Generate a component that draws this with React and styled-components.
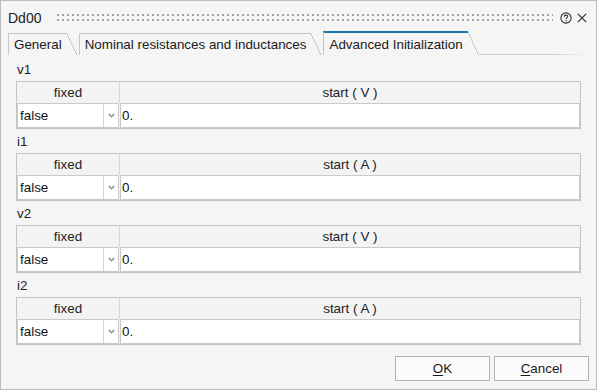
import React from "react";
import styled, { createGlobalStyle } from "styled-components";

const GlobalStyle = createGlobalStyle`
  html, body {
    margin: 0;
    padding: 0;
    background: #ffffff;
  }
  * {
    box-sizing: border-box;
  }
`;

const Window = styled.div`
  width: 597px;
  height: 390px;
  border: 1px solid #bdbdbd;
  background: #f5f5f5;
  font-family: "Liberation Sans", Arial, sans-serif;
  font-size: 13.4px;
  color: #1e1e1e;
  display: flex;
  flex-direction: column;
`;

const TitleBar = styled.div`
  height: 30px;
  padding: 3px 8px 0 7px;
  display: flex;
  align-items: center;
`;

const Title = styled.div`
  font-size: 14px;
  color: #222;
  margin-right: 16px;
`;

// two rows of dots, drag handle
const Grip = styled.div`
  flex: 1;
  height: 7px;
  margin-right: 7px;
  position: relative;

  &::before,
  &::after {
    content: "";
    position: absolute;
    left: 0;
    right: 0;
    height: 2px;
    background-image: linear-gradient(to right, #a3a3a3 2px, transparent 2px);
    background-size: 5px 2px;
  }
  &::before {
    top: 0;
  }
  &::after {
    top: 5px;
  }
`;

const IconButton = styled.span`
  width: 12px;
  height: 12px;
  margin-left: ${(p) => p.$gap || 0}px;
  display: flex;
  align-items: center;
  justify-content: center;
`;

const TabBar = styled.div`
  height: 24px;
  padding-left: 7px;
  display: flex;
  align-items: flex-end;
`;

const Tab = styled.div`
  position: relative;
  height: ${(p) => (p.$active ? 24 : 22)}px;
  padding: 0 5px;
  margin-right: ${(p) => (p.$active ? 10 : 12)}px;
  border-left: 1px solid #c6c6c6;
  border-top: ${(p) => (p.$active ? "2px solid #1b78a8" : "1px solid #c6c6c6")};
  display: flex;
  align-items: center;
  white-space: nowrap;
  color: #1a1a1a;

  &::after {
    content: "";
    position: absolute;
    top: ${(p) => (p.$active ? -1 : 0)}px;
    left: 100%;
    width: 10px;
    height: 100%;
    background: linear-gradient(
      to top right,
      transparent calc(50% - 0.6px),
      #bfbfbf calc(50% - 0.2px),
      #bfbfbf calc(50% + 0.2px),
      transparent calc(50% + 0.6px)
    );
  }
`;

const TabLine = styled.div`
  flex: 1;
  height: 1px;
  margin-right: 10px;
  background: linear-gradient(to right, #d2d2d2 70%, #f0f0f0);
`;

const Content = styled.div`
  padding: 7px 15px 0 15px;
  display: flex;
  flex-direction: column;
  gap: 5px;
`;

const Group = styled.div`
  display: flex;
  flex-direction: column;
`;

const Label = styled.div`
  line-height: 15px;
  margin: 0 0 4px 1px;
`;

const Table = styled.div`
  width: 565px;
  border: 1px solid #c4c4c4;
  display: grid;
  grid-template-columns: 103px 1fr;
  background: #f3f3f3;
`;

const HeaderCell = styled.div`
  height: 21px;
  display: flex;
  align-items: center;
  justify-content: center;
  border-right: ${(p) => (p.$divider ? "1px solid #d4d4d4" : "none")};
  color: #222;
`;

const Cell = styled.div`
  height: 25px;
  background: #ffffff;
  border: 1px solid #c9c9c9;
  margin-right: ${(p) => (p.$gap ? 1 : 0)}px;
  display: flex;
  align-items: center;
  padding-left: ${(p) => p.$pad || 1}px;
  color: #111;
`;

const ComboText = styled.span`
  flex: 1;
`;

const ComboArrow = styled.span`
  width: 15px;
  height: 100%;
  border-left: 1px solid #d4d4d4;
  display: flex;
  align-items: center;
  justify-content: center;
`;

const Footer = styled.div`
  margin-top: 11px;
  padding-right: 7px;
  display: flex;
  justify-content: flex-end;
  gap: 4px;
`;

const Button = styled.button`
  width: 95px;
  height: 25px;
  border: 1px solid #b3b3b3;
  background: #fbfbfb;
  font-family: "Liberation Sans", Arial, sans-serif;
  font-size: 13.4px;
  color: #1a1a1a;
  padding: 0;

  u {
    text-decoration-thickness: 1px;
    text-underline-offset: 2px;
  }
`;

const HelpIcon = () => (
  <svg width="12" height="12" viewBox="0 0 12 12">
    <circle cx="6" cy="6" r="5.1" fill="none" stroke="#2e2e2e" strokeWidth="1.1" />
    <path
      d="M4.3 4.7 C4.3 3.7 5 3.1 6 3.1 C7 3.1 7.7 3.7 7.7 4.5 C7.7 5.4 6.6 5.6 6.1 6.4 L6.1 7.1"
      fill="none"
      stroke="#2e2e2e"
      strokeWidth="1.1"
    />
    <circle cx="6.1" cy="8.8" r="0.7" fill="#2e2e2e" />
  </svg>
);

const CloseIcon = () => (
  <svg width="12" height="12" viewBox="0 0 12 12">
    <path d="M1.8 1.8 L10.2 10.2 M10.2 1.8 L1.8 10.2" stroke="#2e2e2e" strokeWidth="1.2" />
  </svg>
);

const Chevron = () => (
  <svg width="7" height="5" viewBox="0 0 7 5">
    <path d="M0.8 1 L3.5 3.8 L6.2 1" fill="none" stroke="#8a8a8a" strokeWidth="1.3" />
  </svg>
);

const groups = [
  { name: "v1", unit: "V" },
  { name: "i1", unit: "A" },
  { name: "v2", unit: "V" },
  { name: "i2", unit: "A" },
];

function ParamTable({ unit }) {
  return (
    <Table>
      <HeaderCell $divider>fixed</HeaderCell>
      <HeaderCell>start ( {unit} )</HeaderCell>
      <Cell $gap $pad={2}>
        <ComboText>false</ComboText>
        <ComboArrow>
          <Chevron />
        </ComboArrow>
      </Cell>
      <Cell $pad={1}>0.</Cell>
    </Table>
  );
}

export default function App() {
  return (
    <>
      <GlobalStyle />
      <Window>
        <TitleBar>
          <Title>Dd00</Title>
          <Grip />
          <IconButton>
            <HelpIcon />
          </IconButton>
          <IconButton $gap={4}>
            <CloseIcon />
          </IconButton>
        </TitleBar>
        <TabBar>
          <Tab>General</Tab>
          <Tab>Nominal resistances and inductances</Tab>
          <Tab $active>Advanced Initialization</Tab>
          <TabLine />
        </TabBar>
        <Content>
          {groups.map((g) => (
            <Group key={g.name}>
              <Label>{g.name}</Label>
              <ParamTable unit={g.unit} />
            </Group>
          ))}
        </Content>
        <Footer>
          <Button>
            <u>O</u>K
          </Button>
          <Button>
            <u>C</u>ancel
          </Button>
        </Footer>
      </Window>
    </>
  );
}
